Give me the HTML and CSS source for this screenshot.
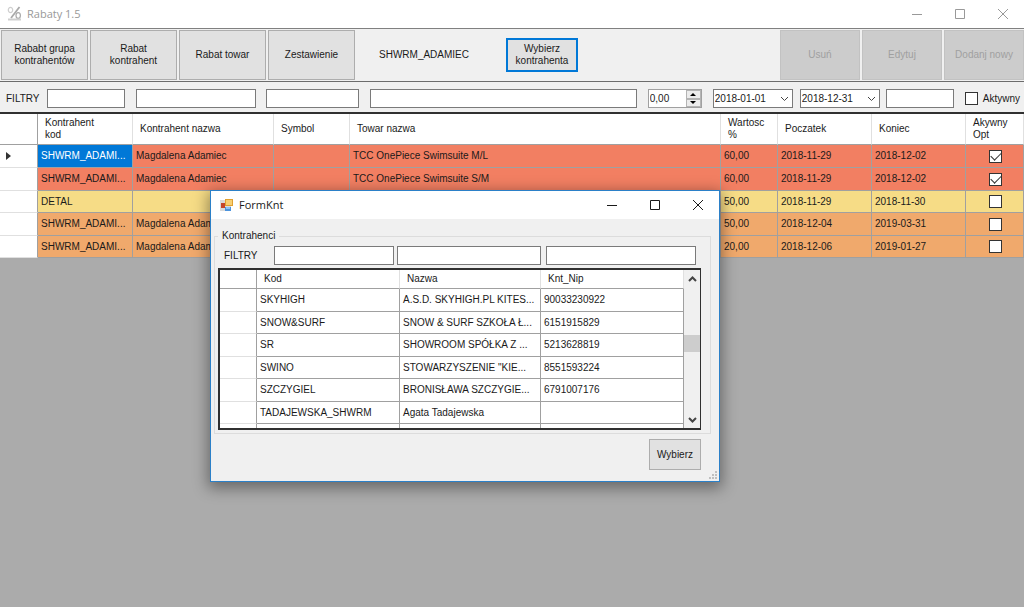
FILE: index.html
```html
<!DOCTYPE html>
<html lang="pl">
<head>
<meta charset="utf-8">
<title>Rabaty 1.5</title>
<link rel="stylesheet" href="styles.css">
</head>
<body>
<main class="app">
  <header class="titlebar titlebar-main">
    <svg class="app-icon" width="16" height="16" viewBox="0 0 16 16" fill="none" stroke="#a9a9a9" stroke-width="1.2"><path d="M12.500 1 4 12" stroke-width="1.800"/><ellipse cx="3.500" cy="4" rx="2.200" ry="2.700" stroke="#cfcfcf"/><ellipse cx="11.200" cy="9.500" rx="2.200" ry="2.900"/><path d="M1 13.500h13" stroke="#cfcfcf" stroke-width="2"/></svg>
    <h1 class="title">Rabaty 1.5</h1>
    <div class="controls">
      <button aria-label="Minimalizuj"><svg width="12" height="12" viewBox="0 0 12 12"><path d="M1 6.500h10"/></svg></button>
      <button aria-label="Maksymalizuj"><svg width="12" height="12" viewBox="0 0 12 12"><path d="M1.500 1.500h9v9h-9z"/></svg></button>
      <button aria-label="Zamknij"><svg width="12" height="12" viewBox="0 0 12 12"><path d="m1 1 10 10M11 1 1 11"/></svg></button>
    </div>
  </header>
  <nav class="toolbar">
    <button class="btn tool">Rababt grupa<br>kontrahentów</button>
    <button class="btn tool">Rabat<br>kontrahent</button>
    <button class="btn tool">Rabat towar</button>
    <button class="btn tool">Zestawienie</button>
    <span class="current">SHWRM_ADAMIEC</span>
    <button class="btn pick">Wybierz<br>kontrahenta</button>
    <div class="edit-tools">
      <button class="btn tool-edit" disabled>Usuń</button>
      <button class="btn tool-edit" disabled>Edytuj</button>
      <button class="btn tool-edit" disabled>Dodanj nowy</button>
    </div>
  </nav>
  <form class="filters">
    <span class="filters-label">FILTRY</span>
    <input class="field f-code" type="text" aria-label="Kontrahent kod">
    <input class="field f-name" type="text" aria-label="Kontrahent nazwa">
    <input class="field f-symbol" type="text" aria-label="Symbol">
    <input class="field f-item" type="text" aria-label="Towar nazwa">
    <div class="spinner">
      <input type="text" value="0,00" aria-label="Wartosc">
      <div class="spin-buttons">
        <button type="button" aria-label="Więcej"><svg width="6" height="3" viewBox="0 0 6 3"><path d="M0 3 3 0l3 3z"/></svg></button>
        <button type="button" aria-label="Mniej"><svg width="6" height="3" viewBox="0 0 6 3"><path d="M0 0l3 3 3-3z"/></svg></button>
      </div>
    </div>
    <div class="date d-from"><select aria-label="Poczatek"><option>2018-01-01</option></select><svg width="9" height="6" viewBox="0 0 9 6"><path d="m1 1 3.500 3.500L8 1"/></svg></div>
    <div class="date d-to"><select aria-label="Koniec"><option>2018-12-31</option></select><svg width="9" height="6" viewBox="0 0 9 6"><path d="m1 1 3.500 3.500L8 1"/></svg></div>
    <input class="field f-extra" type="text" aria-label="Opcja">
    <label class="active"><input class="check" type="checkbox">Aktywny</label>
  </form>
  <table class="grid discounts">
    <colgroup><col class="c-mark"><col class="c-code"><col class="c-name"><col class="c-symbol"><col><col class="c-value"><col class="c-date"><col class="c-date"><col class="c-active"></colgroup>
    <thead><tr><th></th><th>Kontrahent<br>kod</th><th>Kontrahent nazwa</th><th>Symbol</th><th>Towar nazwa</th><th>Wartosc<br>%</th><th>Poczatek</th><th>Koniec</th><th>Akywny<br>Opt</th></tr></thead>
    <tbody>
      <tr class="red"><td><svg class="marker" width="6" height="8" viewBox="0 0 6 8"><path d="M0 0l5 4-5 4z"/></svg></td><td class="selected">SHWRM_ADAMI...</td><td>Magdalena Adamiec</td><td></td><td>TCC OnePiece Swimsuite M/L</td><td>60,00</td><td>2018-11-29</td><td>2018-12-02</td><td><input class="check" type="checkbox" checked aria-label="Aktywny"></td></tr>
      <tr class="red"><td></td><td>SHWRM_ADAMI...</td><td>Magdalena Adamiec</td><td></td><td>TCC OnePiece Swimsuite S/M</td><td>60,00</td><td>2018-11-29</td><td>2018-12-02</td><td><input class="check" type="checkbox" checked aria-label="Aktywny"></td></tr>
      <tr class="yellow"><td></td><td>DETAL</td><td></td><td></td><td></td><td>50,00</td><td>2018-11-29</td><td>2018-11-30</td><td><input class="check" type="checkbox" aria-label="Aktywny"></td></tr>
      <tr class="orange"><td></td><td>SHWRM_ADAMI...</td><td>Magdalena Adamiec</td><td></td><td></td><td>50,00</td><td>2018-12-04</td><td>2019-03-31</td><td><input class="check" type="checkbox" aria-label="Aktywny"></td></tr>
      <tr class="orange"><td></td><td>SHWRM_ADAMI...</td><td>Magdalena Adamiec</td><td></td><td></td><td>20,00</td><td>2018-12-06</td><td>2019-01-27</td><td><input class="check" type="checkbox" aria-label="Aktywny"></td></tr>
    </tbody>
  </table>
</main>

<section class="dialog" role="dialog" aria-label="FormKnt">
  <header class="titlebar">
    <svg class="form-icon" width="13" height="13" viewBox="0 0 13 13"><path d="M0 1h11v11H0z" fill="#dadada"/><path d="M5 0h8v7H5z" fill="#e0a030"/><path d="M6 1h6v5H6z" fill="#f7cf72"/><path d="M1 4h4v5H1z" fill="#c4452a"/><path d="M5 8h6v4H5z" fill="#4b93dd"/><path d="M6 8h4v2H6z" fill="#8fc3f2"/></svg>
    <h2 class="title">FormKnt</h2>
    <div class="controls">
      <button aria-label="Minimalizuj"><svg width="12" height="12" viewBox="0 0 12 12"><path d="M1 6.500h10"/></svg></button>
      <button aria-label="Maksymalizuj"><svg width="12" height="12" viewBox="0 0 12 12"><path d="M1.500 1.500h9v9h-9z"/></svg></button>
      <button aria-label="Zamknij"><svg width="12" height="12" viewBox="0 0 12 12"><path d="m1 1 10 10M11 1 1 11"/></svg></button>
    </div>
  </header>
  <div class="dialog-body">
    <fieldset class="group">
      <legend>Kontrahenci</legend>
      <div class="dialog-filters">
        <span class="filters-label">FILTRY</span>
        <input class="field k-code" type="text" aria-label="Kod">
        <input class="field k-name" type="text" aria-label="Nazwa">
        <input class="field k-nip" type="text" aria-label="Knt_Nip">
      </div>
      <div class="list">
        <div class="viewport">
          <table class="grid clients">
            <colgroup><col class="c-mark"><col class="c-kod"><col class="c-nazwa"><col></colgroup>
            <thead><tr><th></th><th>Kod</th><th>Nazwa</th><th>Knt_Nip</th></tr></thead>
            <tbody>
              <tr><td></td><td>SKYHIGH</td><td>A.S.D. SKYHIGH.PL KITES...</td><td>90033230922</td></tr>
              <tr><td></td><td>SNOW&amp;SURF</td><td>SNOW &amp; SURF SZKOŁA Ł...</td><td>6151915829</td></tr>
              <tr><td></td><td>SR</td><td>SHOWROOM SPÓŁKA Z ...</td><td>5213628819</td></tr>
              <tr><td></td><td>SWINO</td><td>STOWARZYSZENIE "KIE...</td><td>8551593224</td></tr>
              <tr><td></td><td>SZCZYGIEL</td><td>BRONISŁAWA SZCZYGIE...</td><td>6791007176</td></tr>
              <tr><td></td><td>TADAJEWSKA_SHWRM</td><td>Agata Tadajewska</td><td></td></tr>
              <tr><td></td><td></td><td></td><td></td></tr>
            </tbody>
          </table>
        </div>
        <div class="scrollbar">
          <button aria-label="W górę"><svg width="9" height="6" viewBox="0 0 9 6"><path d="m1 5 3.500-3.500L8 5"/></svg></button>
          <div class="track"><div class="thumb"></div></div>
          <button aria-label="W dół"><svg width="9" height="6" viewBox="0 0 9 6"><path d="m1 1 3.500 3.500L8 1"/></svg></button>
        </div>
      </div>
    </fieldset>
    <button class="btn choose">Wybierz</button>
  </div>
  <svg class="grip" width="9" height="9" viewBox="0 0 9 9"><path d="M6 0h2v2H6zM3 3h2v2H3zM6 3h2v2H6zM0 6h2v2H0zM3 6h2v2H3zM6 6h2v2H6z"/></svg>
</section>
</body>
</html>
```
FILE: styles.css
```css
* { box-sizing: border-box; }

body {
  margin: 0;
  min-height: 100vh;
  background: #ababab;
  color: #1a1a1a;
  font: 10px/12px "Liberation Sans", Arial, sans-serif;
}

button, input, select { font: inherit; color: inherit; }

.titlebar { display: flex; align-items: center; height: 28px; background: #fff; }
.titlebar-main { height: 29px; padding-left: 7px; border-bottom: 1px solid #808080; color: #999; }
.title { margin: 0 0 0 4px; font: 400 11px/16px "Open Sans", sans-serif; }
.controls { display: flex; margin-left: auto; }
.controls button { display: flex; width: 43px; height: 26px; padding: 0; border: 0; background: none; align-items: center; justify-content: center; }
.controls svg { fill: none; stroke: currentColor; }

.btn { padding: 0; border: 1px solid #adadad; background: #e1e1e1; text-align: center; white-space: nowrap; }
.toolbar { display: flex; align-items: center; gap: 2px; height: 53px; padding-left: 1px; border-bottom: 1px solid #6c6c6c; background: #f0f0f0; }
.tool { width: 87px; height: 50px; }
.current { margin-left: 22px; }
.pick { width: 72px; height: 34px; margin-left: 35px; border: 2px solid #0078d7; }
.edit-tools { display: flex; gap: 2px; margin-left: auto; }
.tool-edit { width: 80px; height: 50px; border-color: #c2c2c2; background: #ccc; color: #a0a0a0; }

.filters { display: flex; align-items: center; height: 32px; padding: 3px 4px 0 6px; border-bottom: 2px solid #303030; background: #f0f0f0; }
.filters-label { width: 41px; }
.field { min-width: 0; height: 19px; padding: 0 2px; border: 1px solid #7a7a7a; background: #fff; }
.f-code { width: 78px; }
.f-name { width: 120px; margin-left: 11px; }
.f-symbol { width: 93px; margin-left: 10px; }
.f-item { flex: 1; margin: 0 11px 0 11px; }
.spinner { display: flex; width: 54px; height: 19px; border: 1px solid #a0a0a0; background: #fff; }
.spinner input { flex: 1; min-width: 0; padding: 0 1px; border: 0; background: none; }
.spin-buttons { display: flex; flex-direction: column; width: 15px; }
.spin-buttons button { display: flex; flex: 1; min-height: 0; padding: 0; border: 1px solid #b4b4b4; background: #ececec; align-items: center; justify-content: center; }
.date { display: grid; width: 80px; height: 19px; margin-left: 11px; border: 1px solid #7a7a7a; background: #fff; align-items: center; }
.date select, .date svg { grid-area: 1 / 1; }
.date select { width: 100%; height: 100%; padding: 0 1px; border: 0; background: none; appearance: none; }
.date svg { margin-right: 3px; fill: none; stroke: #444; justify-self: end; pointer-events: none; }
.d-to { margin-left: 7px; }
.f-extra { width: 68px; margin-left: 6px; }
.active { display: flex; align-items: center; gap: 5px; margin-left: 11px; }

.check { appearance: none; display: block; flex: none; width: 13px; height: 13px; margin: 0; border: 1px solid #333; background: #fff; }
.check:checked { display: grid; place-items: center; }
.check:checked::before { content: ""; width: 9px; height: 5px; border: solid #333; border-width: 0 0 1px 1px; rotate: -45deg; translate: 0 -1px; }

.grid { width: 100%; table-layout: fixed; border-collapse: separate; border-spacing: 0; }
.grid th, .grid td { padding: 0 3px; overflow: hidden; text-align: left; text-overflow: ellipsis; white-space: nowrap; }
.grid th { padding: 0 7px; border-right: 1px solid #e0e0e0; border-bottom: 1px solid #a0a0a0; background: #fff; font-weight: 400; }
.grid td { height: 23px; border-right: 1px solid #a0a0a0; border-bottom: 1px solid #a0a0a0; }
.grid th:first-child { border-right-color: #a0a0a0; }
.grid td:first-child { background: #fff; border-bottom-color: #e0e0e0; }
.c-mark { width: 38px; }

.discounts th { height: 31px; }
.discounts tr:nth-child(2n + 3) td { height: 22px; }
.discounts td:first-child { padding-left: 6px; }
.discounts .check { margin-left: 20px; }
.marker { display: block; fill: #333; }
.c-code { width: 95px; }
.c-date { width: 94px; }
.c-name { width: 141px; }
.c-symbol { width: 76px; }
.c-value { width: 57px; }
.c-active { width: 58px; }
.red { background: #f27f62; }
.yellow { background: #f6dc86; }
.orange { background: #f0a96c; }
.selected { background: #0078d7; color: #fff; }

.dialog { position: absolute; top: 190px; left: 210px; width: 510px; border: 1px solid #2b80c8; background: #f0f0f0; box-shadow: 0 4px 14px 2px rgb(0 0 0 / 40%); }
.dialog .titlebar { padding-left: 9px; color: #1a1a1a; }
.dialog .title { margin-left: 6px; }
.dialog-body { display: flex; flex-direction: column; padding: 11px 8px 11px 3px; }
.group { min-width: 0; margin: 0; padding: 4px 9px 3px 3px; border: 1px solid #dcdcdc; }
.group legend { padding: 0 4px; }
.dialog-filters { display: flex; align-items: center; margin-bottom: 3px; padding: 0 5px 0 6px; }
.dialog-filters .filters-label { width: 50px; }
.k-code { width: 120px; margin-right: 3px; }
.k-name { width: 144px; margin-right: 5px; }
.k-nip { flex: 1; }
.list { display: flex; height: 162px; border: 2px solid #303030; border-right-width: 1px; background: #fff; }
.viewport { flex: 1; min-width: 0; overflow: hidden; }
.clients .c-mark { width: 37px; }
.clients th { height: 19px; }
.clients tr:nth-child(2n) td { height: 22px; }
.c-kod { width: 143px; }
.c-nazwa { width: 141px; }
.scrollbar { display: flex; flex-direction: column; width: 16px; background: #f0f0f0; }
.scrollbar button { display: flex; height: 17px; padding: 0; border: 0; background: none; align-items: center; justify-content: center; }
.scrollbar svg { fill: none; stroke: #444; stroke-width: 2; }
.track { flex: 1; padding-top: 48px; }
.thumb { height: 17px; background: #cdcdcd; }
.choose { align-self: flex-end; width: 52px; height: 31px; margin: 5px 10px 0 0; }
.grip { position: absolute; right: 1px; bottom: 1px; fill: #bfbfbf; }
```
